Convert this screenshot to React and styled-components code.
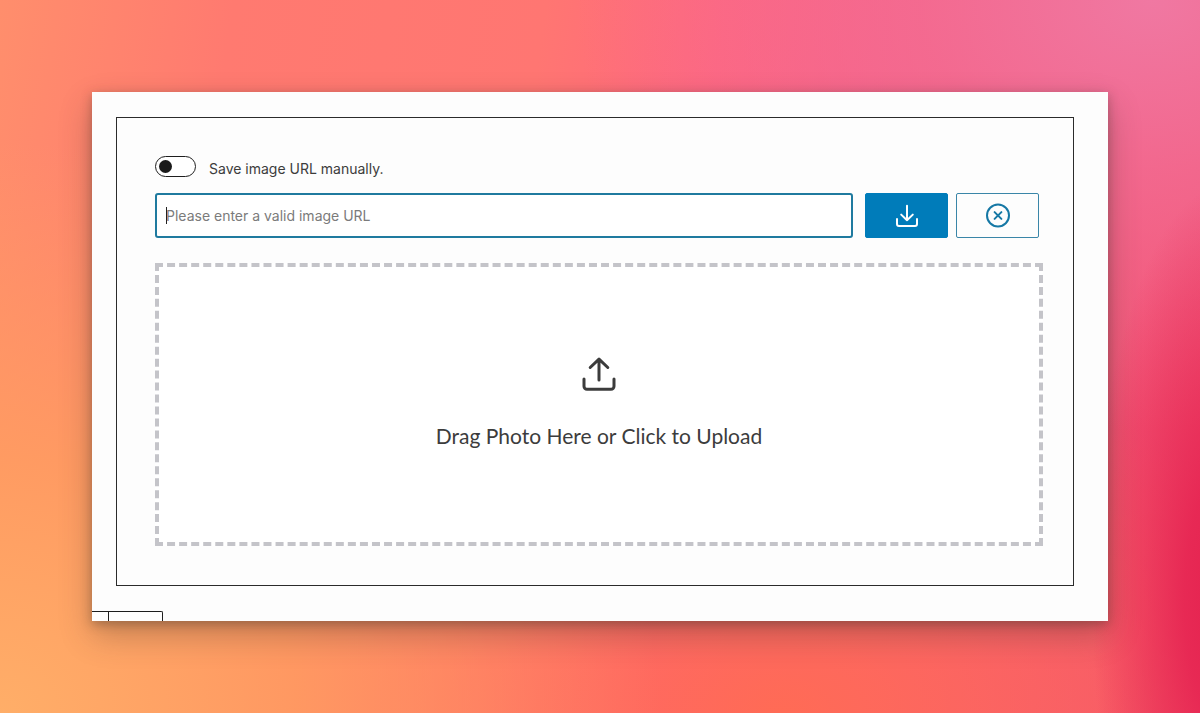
import React, { useState } from "react";
import styled, { createGlobalStyle } from "styled-components";

const GlobalStyle = createGlobalStyle`
  *, *::before, *::after { box-sizing: border-box; }
  body {
    margin: 0;
    font-family: Inter, "Liberation Sans", sans-serif;
    color: #3c3c3c;
  }
`;

const Page = styled.main`
  min-height: 100vh;
  padding: 92px;
  background:
    radial-gradient(ellipse 11% 58% at 102% 84%, #e4224f 0%, rgba(230, 36, 82, 0.9) 30%, rgba(236, 50, 95, 0) 100%),
    radial-gradient(ellipse 48% 60% at 96% 0%, #f078a2 0%, rgba(242, 110, 150, 0.75) 40%, rgba(250, 100, 135, 0) 100%),
    radial-gradient(ellipse 55% 80% at 0% 100%, #ffae68 0%, rgba(255, 158, 96, 0.85) 45%, rgba(255, 140, 100, 0) 100%),
    radial-gradient(ellipse 50% 50% at 65% 100%, #ff6b55 0%, rgba(255, 107, 85, 0) 100%),
    linear-gradient(98deg, #ff8e6c 0%, #ff7a70 18%, #ff7672 42%, #ff667e 56%, #fa5f80 68%, #f0506f 100%);
`;

const Card = styled.section`
  display: flex;
  flex-direction: column;
  gap: 25px;
  padding-top: 25px;
  background: #fdfdfd;
  box-shadow: 0 14px 30px rgba(60, 50, 40, 0.3), 0 3px 10px rgba(60, 50, 40, 0.34);
`;

const Frame = styled.form`
  display: flex;
  flex-direction: column;
  margin: 0 34px 0 24px;
  padding: 38px 34px 39px 38px;
  border: 1px solid #2b2b2b;
`;

const ToggleLabel = styled.label`
  display: flex;
  align-items: flex-start;
  gap: 13px;
  height: 21px;
  margin-bottom: 16px;
  font-size: 14px;
  line-height: 25px;
  cursor: pointer;
`;

const Toggle = styled.input`
  appearance: none;
  display: flex;
  align-items: center;
  width: 41px;
  height: 21px;
  margin: 0;
  padding: 0 3px;
  border: 1px solid #1e1e1e;
  border-radius: 11px;
  background: #fff;

  &::before {
    content: "";
    width: 13px;
    height: 13px;
    border-radius: 50%;
    background: #1a1a1a;
  }

  &:checked {
    justify-content: flex-end;
  }
`;

const UrlRow = styled.div`
  display: flex;
  gap: 8px;
  margin-bottom: 25px;
`;

const Field = styled.div`
  position: relative;
  flex: 1;
  margin-right: 4px;
`;

const UrlInput = styled.input`
  display: block;
  width: 100%;
  height: 45px;
  padding: 0 9px;
  border: 2px solid #1f7a9f;
  border-radius: 3px;
  outline: none;
  background: #fff;
  color: #3c3c3c;
  font: inherit;
  font-size: 14px;
  caret-color: transparent;

  &::placeholder {
    color: #7b7b7b;
    opacity: 1;
  }
`;

const Caret = styled.span`
  position: absolute;
  left: 11px;
  top: 14px;
  width: 1px;
  height: 17px;
  background: #222;
`;

const ActionButton = styled.button`
  display: flex;
  align-items: center;
  justify-content: center;
  width: 83px;
  height: 45px;
  padding: 0;
  border: 1px solid ${(p) => (p.$primary ? "#007cba" : "#3a86a8")};
  border-radius: 2px;
  background: ${(p) => (p.$primary ? "#007cba" : "#fdfdfd")};
  color: ${(p) => (p.$primary ? "#fff" : "#1678a5")};
  cursor: pointer;
`;

const DropZone = styled.button`
  display: flex;
  flex-direction: column;
  align-items: center;
  justify-content: center;
  gap: 31px;
  height: 283px;
  margin-right: -4px;
  padding: 0 0 2px;
  border: 4px dashed #c4c4c9;
  background: #fff;
  color: #3c3c3c;
  font-family: Lato, sans-serif;
  font-size: 21px;
  line-height: 28px;
  cursor: pointer;
`;

const Tabs = styled.div`
  display: flex;
  height: 10px;
`;

const Tab = styled.div`
  width: ${(p) => p.$width}px;
  border: solid #1e1e1e;
  border-width: 1px 1px 0 0;
  border-top-right-radius: ${(p) => (p.$last ? 2 : 0)}px;
  background: #fff;
`;

const DownloadIcon = () => (
  <svg width="24" height="24" viewBox="0 0 24 24" fill="none" stroke="currentColor" strokeWidth="2" strokeLinecap="round" strokeLinejoin="round" aria-hidden="true">
    <path d="M12 1.8v14.4M6.2 10.6l5.8 5.6 5.8-5.6" />
    <path d="M2 15v5a2 2 0 0 0 2 2h16a2 2 0 0 0 2-2v-5" />
  </svg>
);

const CloseIcon = () => (
  <svg width="26" height="26" viewBox="0 0 26 26" fill="none" stroke="currentColor" strokeWidth="2" strokeLinecap="round" aria-hidden="true">
    <circle cx="13" cy="12.5" r="11" />
    <path d="M9.6 9.1l6.8 6.8M16.4 9.1l-6.8 6.8" />
  </svg>
);

const UploadIcon = () => (
  <svg width="34" height="34" viewBox="0 0 34 34" fill="none" stroke="currentColor" strokeWidth="3" strokeLinecap="round" strokeLinejoin="round" aria-hidden="true">
    <path d="M17 23V2.5M8.2 10.5L17 2.2l8.8 8.3" />
    <path d="M2 22v7.3a3 3 0 0 0 3 3h24a3 3 0 0 0 3-3V22" />
  </svg>
);

export default function App() {
  const [manual, setManual] = useState(false);
  const [url, setUrl] = useState("");

  return (
    <>
      <GlobalStyle />
      <Page>
        <Card>
          <Frame onSubmit={(e) => e.preventDefault()}>
            <ToggleLabel>
              <Toggle type="checkbox" role="switch" checked={manual} onChange={(e) => setManual(e.target.checked)} />
              Save image URL manually.
            </ToggleLabel>
            <UrlRow>
              <Field>
                <UrlInput
                  type="url"
                  aria-label="Image URL"
                  placeholder="Please enter a valid image URL"
                  value={url}
                  onChange={(e) => setUrl(e.target.value)}
                />
                {url === "" && <Caret />}
              </Field>
              <ActionButton type="submit" $primary aria-label="Save image">
                <DownloadIcon />
              </ActionButton>
              <ActionButton type="button" aria-label="Clear" onClick={() => setUrl("")}>
                <CloseIcon />
              </ActionButton>
            </UrlRow>
            <DropZone type="button">
              <UploadIcon />
              Drag Photo Here or Click to Upload
            </DropZone>
          </Frame>
          <Tabs>
            <Tab $width={17} />
            <Tab $width={54} $last />
          </Tabs>
        </Card>
      </Page>
    </>
  );
}
